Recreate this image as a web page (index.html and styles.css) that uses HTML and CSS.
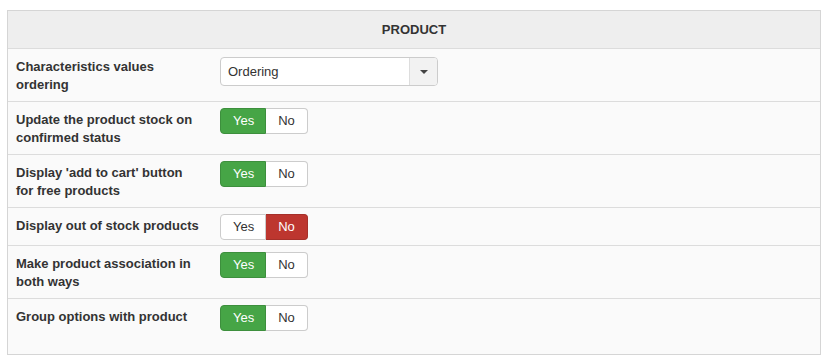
FILE: index.html
```html
<!DOCTYPE html>
<html lang="en">
<head>
  <meta charset="UTF-8" />
  <title>Product settings</title>
  <link rel="stylesheet" href="styles.css">
</head>
<body>
  <div class="panel">
    <div class="panel-head">PRODUCT</div>

    <div class="row">
      <div class="label">Characteristics values ordering</div>
      <div class="control control-select">
        <div class="select">
          <span class="select-value">Ordering</span>
          <span class="select-caret"><i></i></span>
        </div>
      </div>
    </div>

    <div class="row">
      <div class="label">Update the product stock on confirmed status</div>
      <div class="control">
        <div class="toggle"><span class="btn yes active">Yes</span><span class="btn no">No</span></div>
      </div>
    </div>

    <div class="row">
      <div class="label">Display 'add to cart' button for free products</div>
      <div class="control">
        <div class="toggle"><span class="btn yes active">Yes</span><span class="btn no">No</span></div>
      </div>
    </div>

    <div class="row">
      <div class="label">Display out of stock products</div>
      <div class="control">
        <div class="toggle"><span class="btn yes">Yes</span><span class="btn no active">No</span></div>
      </div>
    </div>

    <div class="row">
      <div class="label">Make product association in both ways</div>
      <div class="control">
        <div class="toggle"><span class="btn yes active">Yes</span><span class="btn no">No</span></div>
      </div>
    </div>

    <div class="row">
      <div class="label">Group options with product</div>
      <div class="control">
        <div class="toggle"><span class="btn yes active">Yes</span><span class="btn no">No</span></div>
      </div>
    </div>
  </div>
</body>
</html>
```

FILE: styles.css
```css
* { box-sizing: border-box; }
body {
  margin: 0; background: #fff; color: #333;
  font-family: "Liberation Sans", Arial, Helvetica, sans-serif; font-size: 13px;
}
.panel {
  margin: 10px 0 0 7px; width: 814px;
  border: 1px solid #d5d5d5; background: #fafafa; padding-bottom: 18px;
}
.panel-head {
  background: #eee; border-bottom: 1px solid #dcdcdc;
  text-align: center; font-weight: bold; line-height: 18px; padding: 10px 0 9px;
}
.row {
  display: grid; grid-template-columns: 204px 1fr;
  border-top: 1px solid #dcdcdc;
}
.panel-head + .row { border-top: none; }
.label {
  padding: 9px 12px 7px 8px; font-weight: bold; line-height: 18px;
}
.control { padding: 6px 8px 5px; }
.control-select { padding-top: 8px; }

.select {
  display: flex; width: 218px; height: 29px;
  border: 1px solid #ccc; border-radius: 4px; background: #fff; overflow: hidden;
}
.select-value { flex: 1; padding-left: 7px; line-height: 27px; }
.select-caret {
  width: 28px; background: #f2f2f2; border-left: 1px solid #ddd;
  display: flex; align-items: center; justify-content: center;
}
.select-caret i {
  width: 0; height: 0; margin-top: 1px;
  border-left: 4px solid transparent; border-right: 4px solid transparent;
  border-top: 4px solid #444;
}

.toggle { display: inline-flex; }
.btn {
  display: block; line-height: 18px; padding: 3px 12px;
  border: 1px solid #ccc; background: #fff; color: #333;
}
.btn.yes { border-radius: 4px 0 0 4px; width: 46px; }
.btn.no { border-radius: 0 4px 4px 0; border-left: none; width: 42px; text-align: center; }
.btn.yes.active { background: #46a546; border-color: #3d8f3d; color: #fff; }
.btn.no.active { background: #bd362f; border-color: #a5302a; color: #fff; }
```
